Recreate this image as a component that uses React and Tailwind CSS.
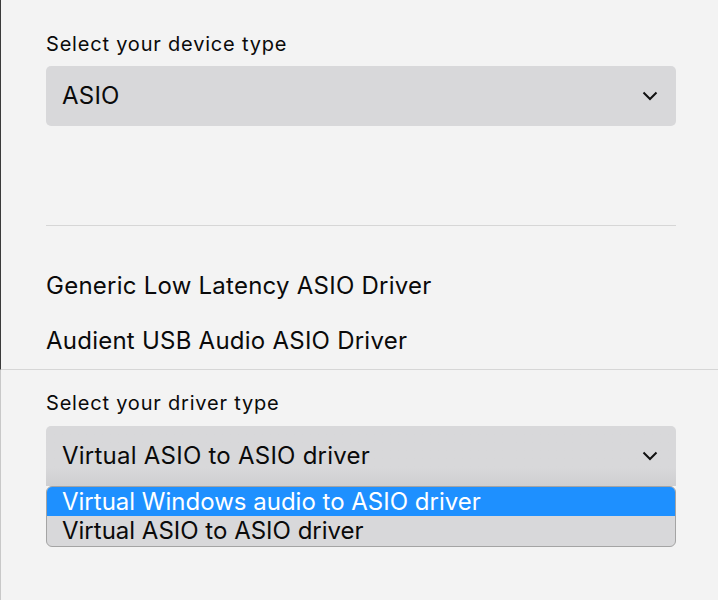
import React from "react";

function Chevron() {
  return (
    <svg width="16" height="10" viewBox="0 0 16 10" fill="none" className="shrink-0">
      <polyline points="1.5,1.5 8,8 14.5,1.5" stroke="#111" strokeWidth="2" />
    </svg>
  );
}

function SelectBox({ value, open }) {
  return (
    <div
      className={
        "flex h-[60px] w-[630px] items-center justify-between bg-[#d8d8da] pl-4 pr-[18px] text-[24px] tracking-[0.01em] text-[#0a0a0a] " +
        (open ? "rounded-t-[5px] bg-gradient-to-b from-[#d8d8da] from-70% to-[#cfcfd1]" : "rounded-[5px]")
      }
    >
      <span>{value}</span>
      <Chevron />
    </div>
  );
}

const drivers = ["Generic Low Latency ASIO Driver", "Audient USB Audio ASIO Driver"];
const options = ["Virtual Windows audio to ASIO driver", "Virtual ASIO to ASIO driver"];

export default function App() {
  return (
    <div className="min-h-[600px] w-[718px] bg-[#f3f3f3] font-['Inter',sans-serif] text-[#0a0a0a]">
      <div className="h-[370px] border-b border-l border-b-[#d6d6d6] border-l-[#3a3a3a] pl-[45px] pt-[32px]">
        <div className="text-[20px] leading-[24px] tracking-[0.04em]">Select your device type</div>
        <div className="mt-[10px]">
          <SelectBox value="ASIO" />
        </div>
        <div className="mt-[99px] w-[630px] border-t border-[#d6d6d6]" />
        <div className="mt-[45px] flex flex-col gap-[25px] text-[24px] leading-[30px] tracking-[0.01em]">
          {drivers.map((d) => (
            <div key={d}>{d}</div>
          ))}
        </div>
      </div>
      <div className="h-[230px] border-l border-[#c8c8c8] pl-[45px] pt-[21px]">
        <div className="text-[20px] leading-[24px] tracking-[0.04em]">Select your driver type</div>
        <div className="mt-[11px]">
          <SelectBox value="Virtual ASIO to ASIO driver" open />
        </div>
        <div className="w-[630px] overflow-hidden rounded-[6px] border border-[#a4a4a4] bg-[#d8d8da] text-[24px]">
          {options.map((o, i) => (
            <div
              key={o}
              className={
                "pl-[15px] " +
                (i === 0 ? "bg-[#1e90ff] leading-[29px] text-white" : "leading-[30px] text-[#0a0a0a]")
              }
            >
              {o}
            </div>
          ))}
        </div>
      </div>
    </div>
  );
}
